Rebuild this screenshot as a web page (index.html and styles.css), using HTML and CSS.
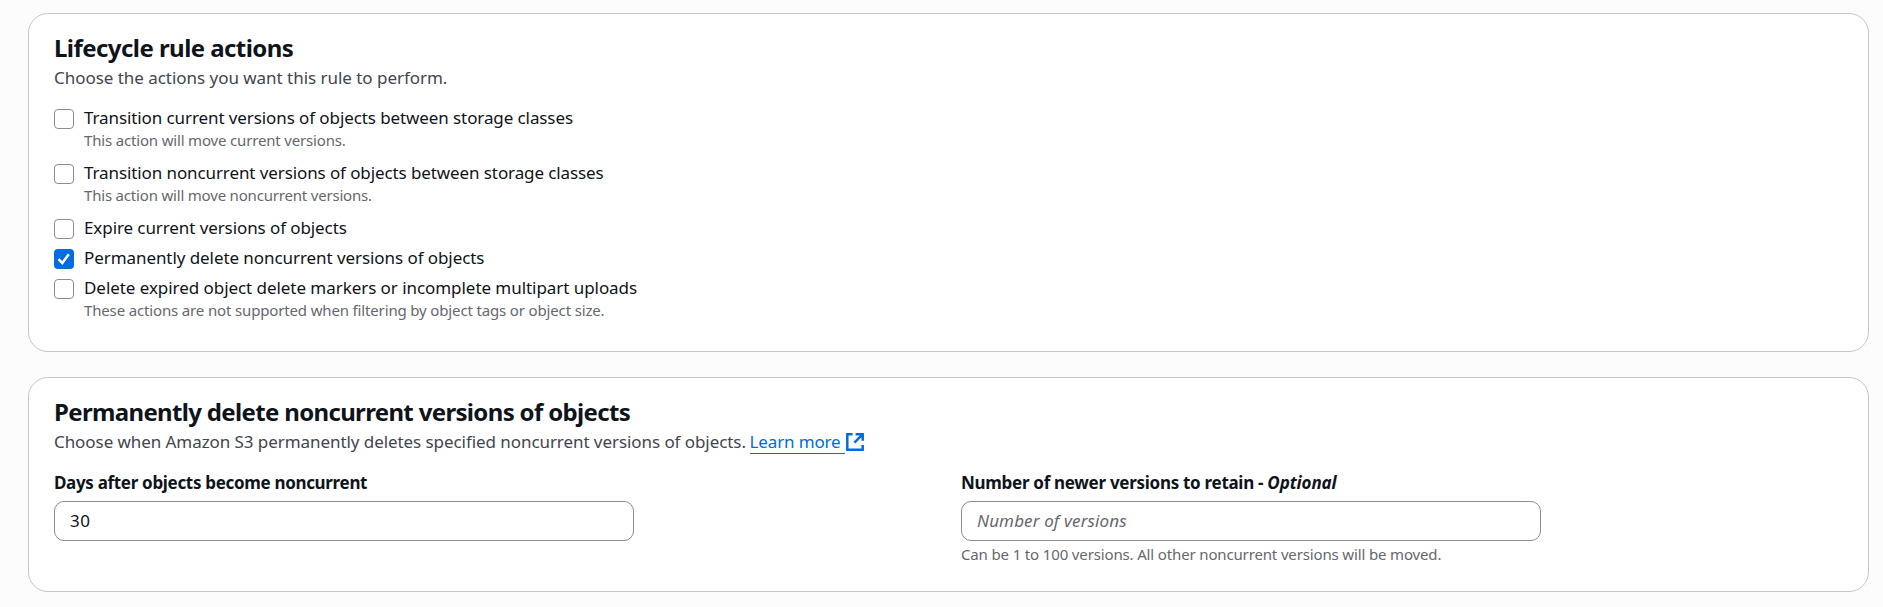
FILE: index.html
```
<!DOCTYPE html>
<html lang="en">
<head>
<meta charset="utf-8">
<title>Lifecycle rule</title>
<link rel="stylesheet" href="styles.css">
</head>
<body>
<main class="page">
  <section class="card card-actions">
    <h2 class="card-title"><span class="title-actions">Lifecycle rule actions</span></h2>
    <p class="card-desc"><span class="desc-actions">Choose the actions you want this rule to perform.</span></p>
    <div class="options">
      <label class="option">
        <span class="box"></span>
        <span class="option-text"><span class="label-a">Transition current versions of objects between storage classes</span><small class="hint-a">This action will move current versions.</small></span>
      </label>
      <label class="option">
        <span class="box"></span>
        <span class="option-text"><span class="label-b">Transition noncurrent versions of objects between storage classes</span><small class="hint-b">This action will move noncurrent versions.</small></span>
      </label>
      <label class="option">
        <span class="box"></span>
        <span class="option-text"><span class="label-c">Expire current versions of objects</span></span>
      </label>
      <label class="option">
        <span class="box box-checked"><svg class="check" viewBox="0 0 20 20"><path d="M4.6 10.2 8.3 14.1 14.8 5.3"/></svg></span>
        <span class="option-text"><span class="label-d">Permanently delete noncurrent versions of objects</span></span>
      </label>
      <label class="option">
        <span class="box"></span>
        <span class="option-text"><span class="label-e">Delete expired object delete markers or incomplete multipart uploads</span><small class="hint-e">These actions are not supported when filtering by object tags or object size.</small></span>
      </label>
    </div>
  </section>
  <section class="card card-delete">
    <h2 class="card-title"><span class="title-delete">Permanently delete noncurrent versions of objects</span></h2>
    <p class="card-desc"><span class="desc-delete">Choose when Amazon S3 permanently deletes specified noncurrent versions of objects.</span><a class="link"><span class="link-text">Learn more</span><svg class="external" viewBox="0 0 18 18"><path d="M6.6 1.3H1.3v15.4h15.4v-4.6M9.6 1.3h7.1v6.5M16.3 1.7 8.4 9.6"/></svg></a></p>
    <div class="fields">
      <div class="field">
        <label class="field-label flabel-days">Days after objects become noncurrent</label>
        <div class="input"><span class="value">30</span></div>
      </div>
      <div class="field">
        <label class="field-label flabel-number">Number of newer versions to retain - <i class="optional">Optional</i></label>
        <div class="input"><span class="placeholder">Number of versions</span></div>
        <small class="field-hint">Can be 1 to 100 versions. All other noncurrent versions will be moved.</small>
      </div>
    </div>
  </section>
</main>
</body>
</html>
```
FILE: styles.css
```
* { box-sizing: border-box; }
body {
  margin: 0;
  background: #fcfcfd;
  color: #0f141a;
  font-family: "Noto Sans", "Open Sans", sans-serif;
  font-size: 17px;
  line-height: 25px;
}
.page {
  display: flex;
  flex-direction: column;
  gap: 25px;
  padding: 13px 14px 15px 28px;
}
.card {
  border: 1px solid #c6c6cd;
  border-radius: 20px;
  background: #fff;
  padding: 19px 25px 0;
}
.card-actions { height: 339px; }
.card-delete { height: 215px; }
.card-title { margin: 0; font-size: 24px; line-height: 30px; font-weight: 700; white-space: nowrap; }
.card-desc { display: flex; margin: 2px 0 0; color: #424650; white-space: nowrap; }
.options { display: flex; flex-direction: column; gap: 5px; padding-top: 15px; }
.option { display: flex; gap: 10px; }
.box { flex: none; width: 20px; height: 20px; margin-top: 4px; border: 1px solid #8c8c94; border-radius: 4px; background: #fff; }
.box-checked { border: 0; background: #006ce0; }
.check { display: block; width: 20px; height: 20px; fill: none; stroke: #fff; stroke-width: 2.5; }
.option-text { display: flex; flex-direction: column; align-items: flex-start; white-space: nowrap; }
small { font-size: 15px; line-height: 20px; color: #656871; }
.option small { margin-bottom: 5px; }
.link { display: flex; margin-left: 3.7px; color: #006ce0; }
.link-text { border-bottom: 1px solid #006ce0; height: 25px; padding-right: 4.2px; letter-spacing: -0.15px; }
.external { width: 18px; height: 18px; margin: 4px 0 0 1px; fill: none; stroke: #006ce0; stroke-width: 2.5; }
.fields { display: grid; grid-template-columns: 580px 580px; column-gap: 327px; padding-top: 16px; }
.field { display: flex; flex-direction: column; }
.field-label { font-weight: 700; white-space: nowrap; }
.input { display: flex; align-items: center; height: 40px; margin-top: 6px; padding: 0 15px 2px; border: 1px solid #8c8c94; border-radius: 10px; }
.value { letter-spacing: 0.5px; }
.placeholder { color: #656871; font-style: italic; letter-spacing: 0.13px; }
.field-hint { margin-top: 3px; letter-spacing: -0.145px; }
.title-actions { letter-spacing: -0.55px; }
.title-delete { letter-spacing: -0.66px; }
.desc-actions { letter-spacing: -0.035px; }
.desc-delete { letter-spacing: -0.067px; }
.label-a { letter-spacing: -0.095px; }
.label-b { letter-spacing: -0.1px; }
.label-c { letter-spacing: -0.09px; }
.label-d { letter-spacing: -0.07px; }
.label-e { letter-spacing: -0.055px; }
.hint-a { letter-spacing: -0.17px; }
.hint-b { letter-spacing: -0.19px; }
.hint-e { letter-spacing: -0.15px; }
.flabel-days { letter-spacing: -0.32px; }
.flabel-number { letter-spacing: -0.29px; }
.optional { letter-spacing: -0.1px; }
```
